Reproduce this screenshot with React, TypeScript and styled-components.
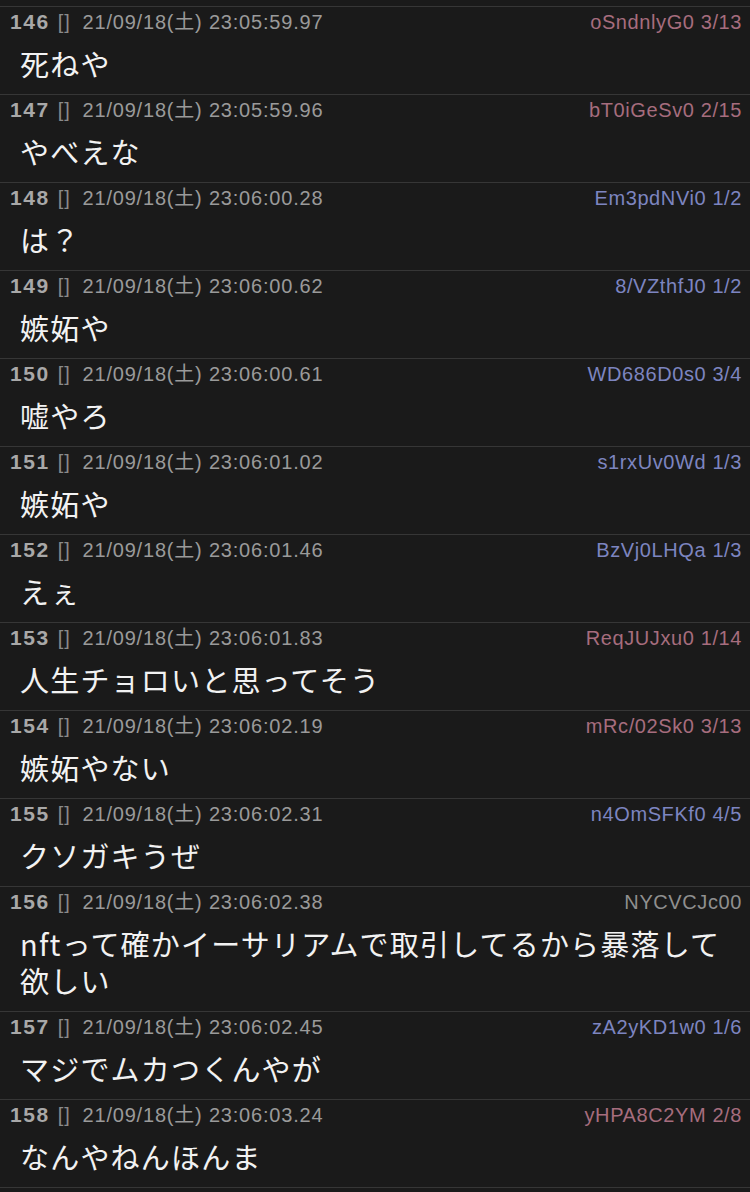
import styled, { createGlobalStyle } from "styled-components";

type Tone = "pink" | "blue" | "grey";

type Post = {
  no: number;
  time: string;
  id: string;
  count?: string;
  tone: Tone;
  body: string;
};

const posts: Post[] = [
  { no: 146, time: "23:05:59.97", id: "oSndnlyG0", count: "3/13", tone: "pink", body: "死ねや" },
  { no: 147, time: "23:05:59.96", id: "bT0iGeSv0", count: "2/15", tone: "pink", body: "やべえな" },
  { no: 148, time: "23:06:00.28", id: "Em3pdNVi0", count: "1/2", tone: "blue", body: "は？" },
  { no: 149, time: "23:06:00.62", id: "8/VZthfJ0", count: "1/2", tone: "blue", body: "嫉妬や" },
  { no: 150, time: "23:06:00.61", id: "WD686D0s0", count: "3/4", tone: "blue", body: "嘘やろ" },
  { no: 151, time: "23:06:01.02", id: "s1rxUv0Wd", count: "1/3", tone: "blue", body: "嫉妬や" },
  { no: 152, time: "23:06:01.46", id: "BzVj0LHQa", count: "1/3", tone: "blue", body: "えぇ" },
  { no: 153, time: "23:06:01.83", id: "ReqJUJxu0", count: "1/14", tone: "pink", body: "人生チョロいと思ってそう" },
  { no: 154, time: "23:06:02.19", id: "mRc/02Sk0", count: "3/13", tone: "pink", body: "嫉妬やない" },
  { no: 155, time: "23:06:02.31", id: "n4OmSFKf0", count: "4/5", tone: "blue", body: "クソガキうぜ" },
  {
    no: 156,
    time: "23:06:02.38",
    id: "NYCVCJc00",
    tone: "grey",
    body: "nftって確かイーサリアムで取引してるから暴落して欲しい",
  },
  { no: 157, time: "23:06:02.45", id: "zA2yKD1w0", count: "1/6", tone: "blue", body: "マジでムカつくんやが" },
  { no: 158, time: "23:06:03.24", id: "yHPA8C2YM", count: "2/8", tone: "pink", body: "なんやねんほんま" },
];

const toneColors: Record<Tone, string> = {
  pink: "#a66d7e",
  blue: "#7d85c0",
  grey: "#8f8f8f",
};

const GlobalStyle = createGlobalStyle`
  html, body {
    margin: 0;
    padding: 0;
    background: #1a1a1a;
  }
`;

const Thread = styled.div`
  width: 750px;
  padding-top: 6px;
  background: #1a1a1a;
  font-family: "Noto Sans CJK JP", sans-serif;
`;

const Row = styled.div`
  border-top: 1px solid #363636;
  padding: 0 8px 12px 10px;
  &:last-child {
    border-bottom: 1px solid #363636;
  }
`;

const Header = styled.div`
  display: flex;
  align-items: baseline;
  height: 30px;
  line-height: 30px;
  font-family: "Liberation Sans", Arial, "Noto Sans CJK JP", sans-serif;
  font-size: 20px;
  letter-spacing: 0.8px;
  color: #9a9a9a;
  white-space: nowrap;
`;

const Num = styled.span`
  font-weight: bold;
  font-size: 21px;
  letter-spacing: 1.6px;
  color: #a8a8a8;
`;

const Bracket = styled.span`
  margin-left: 8px;
  color: #8a8a8a;
`;

const Stamp = styled.span`
  margin-left: 12px;
`;

const Id = styled.span<{ $tone: Tone }>`
  margin-left: auto;
  letter-spacing: 0.6px;
  color: ${({ $tone }) => toneColors[$tone]};
`;

const Body = styled.div`
  margin-top: 8px;
  padding: 0 20px 0 10px;
  font-size: 29px;
  line-height: 37px;
  letter-spacing: 1.2px;
  color: #f2f2f2;
`;

export default function App() {
  return (
    <>
      <GlobalStyle />
      <Thread>
        {posts.map((p) => (
          <Row key={p.no}>
            <Header>
              <Num>{p.no}</Num>
              <Bracket>[]</Bracket>
              <Stamp>21/09/18(土) {p.time}</Stamp>
              <Id $tone={p.tone}>
                {p.id}
                {p.count ? ` ${p.count}` : ""}
              </Id>
            </Header>
            <Body>{p.body}</Body>
          </Row>
        ))}
      </Thread>
    </>
  );
}
